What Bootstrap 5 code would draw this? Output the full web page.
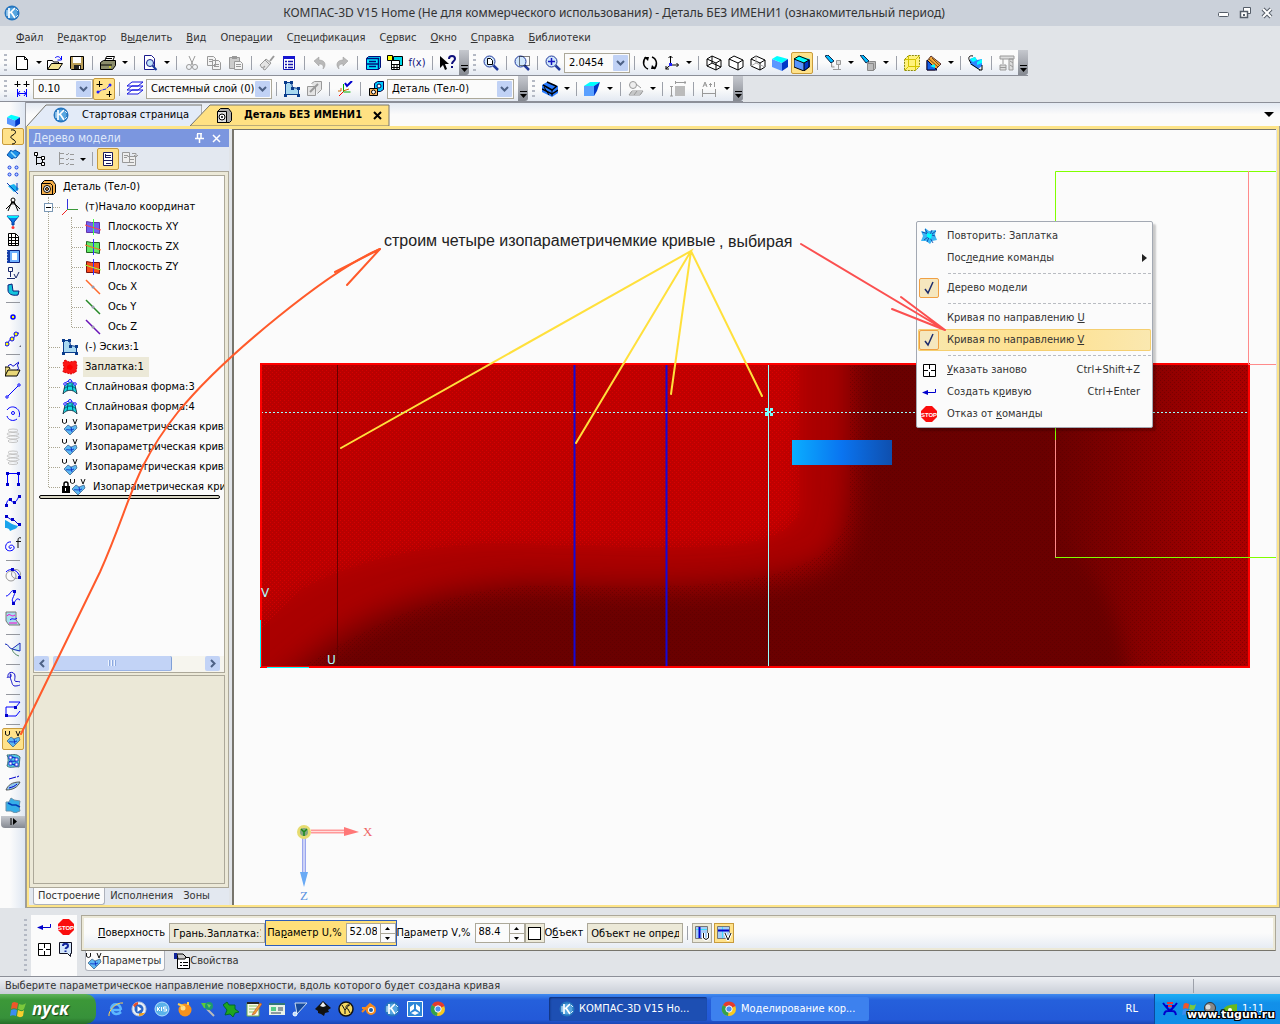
<!DOCTYPE html>
<html lang="ru">
<head>
<meta charset="utf-8">
<meta name="viewport" content="width=device-width, initial-scale=1">
<title>КОМПАС-3D V15 Home</title>
<link href="https://cdn.jsdelivr.net/npm/bootstrap@5.3.0/dist/css/bootstrap.min.css" rel="stylesheet">
<style>
:root{--ui:"DejaVu Sans Condensed","DejaVu Sans",Tahoma,sans-serif;--dither:#e1e4e8;--beige:#ece9d8}
body{font-family:var(--ui);font-size:11px;line-height:16px;color:#000;background:var(--dither)}
button,select,input{font:inherit;color:inherit;padding:0;margin:0;border:0;background:none;border-radius:0}
svg{display:block;flex:none}
svg.ic{width:16px;height:16px;overflow:visible}
.app{min-height:100vh}
.titlebar{height:26px;background:#cbd1da;color:#333;font-family:"Noto Sans","Open Sans",sans-serif;font-size:12px}
.menubar{height:24px;padding-left:16px;gap:14px}
.menubar a,.pagetab,.ctx button{color:#333;text-decoration:none}
.grip{width:3px;height:17px;margin:0 4px 0 4px;background:repeating-linear-gradient(#b4b9c4 0 2px,transparent 2px 5px)}
.toolrow{height:26px}
.strip{height:26px;background:linear-gradient(#fbfbfb 50%,#e3e9f2);border-bottom:1px solid #8c8f98}
.tb{width:22px;height:22px;display:flex;align-items:center;justify-content:center;flex:none}
.tb.on{background:#ffe28a;border:1px solid #c89b3c;border-radius:2px}
.dd{width:11px;height:22px;display:flex;align-items:center;justify-content:center;flex:none}
.dd::after{content:"";border:3px solid transparent;border-top-color:#000;border-bottom:0}
.dd.w{width:13px}
.vsep{width:9px;height:14px;flex:none;background:linear-gradient(#9da1aa,#9da1aa) center/1px 100% no-repeat}
.endcap{width:10px;height:25px;background:linear-gradient(#c5c8ce,#858991);border-radius:0 0 3px 0;flex:none;display:flex;align-items:flex-end;justify-content:center;padding-bottom:3px}
.combo{display:flex;height:20px;border:1px solid #aca899;background:#fbfbfb;flex:none}
.combo select{appearance:none;flex:1;min-width:0;padding-left:4px;overflow:hidden}
.combo i{width:15px;height:16px;margin:1px;background:#c1d2f5;border-radius:1px;display:flex;align-items:center;justify-content:center}
.c-step{width:60px}.c-layer{width:126px}.c-part{width:127px}.c-zoom{width:66px}
.tabsrow{height:24px;border-top:1px solid #8c8f98;background:linear-gradient(#e3e9f2,#fbfbfb 50%)}
.doctab{position:relative;height:22px;margin-top:1px}
.tab-start{width:176px}.tab-part{width:200px;margin-left:-12px}.tab-part .ic{margin-left:26px}
.doctab .shape{position:absolute;inset:0;width:100%;height:100%}
.doctab span,.doctab button,.doctab .ic{position:relative}
.side{width:26px;background:linear-gradient(90deg,#fbfbfb 40%,#dfe7f2);border-right:1px solid #9a9da4;padding-top:9px;padding-left:2px}
.side .tb.s{height:17px}
.hsep{height:1px;width:14px;margin:4px 0 3px 4px;background:#94979e;flex:none}
.side .endcap{width:24px;height:12px;border-radius:0 0 0 4px;margin-left:-1px}
.work{border:1px solid #a49f8c;border-top:0}
.work-in{border:2px solid #fde488;border-top-width:3px}
.tree{width:200px;background:#e3e8f0}
.tree-head{height:18px;background:#7b96df;color:#dfe8fa;padding:0 4px 0 4px;font-size:12px}
.tree-tools{padding:1px 0}
.tree-frame{background:var(--beige);border:1px solid #aca899;padding:3px}
.tree-list{height:498px;background:#fbfbfb;border:1px solid #aca899;overflow:hidden;padding-top:1px}
.tree-list ul{list-style:none;margin:0;padding:0;position:relative;white-space:nowrap}
.node{height:20px;display:flex;align-items:center;gap:7px;position:relative}
.l0 .node{padding-left:6px}
.l1 .node{padding-left:28px}
.l2 .node{padding-left:51px}
.tree-list .l1::before,.tree-list .l2::before{content:"";position:absolute;left:14px;top:0;bottom:10px;border-left:1px dotted #a9a590}
.tree-list .l2::before{left:37px}
.node::before{content:"";position:absolute;left:15px;width:11px;border-top:1px dotted #a9a590}
.root::before{display:none}
.l2 .node::before{left:38px}
.expander{position:absolute;left:10px;top:6px;width:9px;height:9px;background:#fff;border:1px solid #7b98b5;display:flex;align-items:center;justify-content:center}
.expander::after{content:"";width:5px;height:1px;background:#000}
.chosen{background:var(--beige);height:20px;line-height:20px;padding:0 5px 0 2px;margin-left:-2px}
.lock{margin-right:-7px}
.rollbar{height:4px;margin:-2px 4px 0 5px;border:1px solid #000;border-radius:2px;background:#d8d5c3;position:relative}
.hscroll{height:16px;background:#f6f5ee}
.hscroll button{width:15px;height:15px;background:#c2d3f6;border-radius:2px;display:flex;align-items:center;justify-content:center}
.hscroll .thumb{width:119px;border-right:1px solid #7f9fd6;border-bottom:1px solid #9ab3e4}
.tree-low{background:#ebe8d7;border:1px solid #aca899;margin-top:2px}
.pagetab{height:17px;padding:0 4px;border:1px solid transparent;border-top:0;border-radius:0 0 3px 3px;display:flex;align-items:center}
.pagetab.cur{background:#fbfbfb;border-color:#aeb2bb}
.pagetab.tall{height:20px;padding:0 3px 0 0}
.view{background:#fbfbfb;border-left:2px solid #77756c;border-top:1px solid #77756c;margin-left:3px;margin-right:1px;overflow:hidden}
.notes,.scene{position:absolute;left:0;top:0;pointer-events:none}
.ctx{position:absolute;left:916px;top:221px;width:237px;background:#fbfbfb;border:1px solid #a3a9b3;border-radius:2px;padding:3px 1px 2px;box-shadow:3px 3px 2px #0003}
.ctx button{height:22px;width:100%;display:flex;align-items:center;text-align:left;padding-right:11px}
.ctx .slot{width:20px;height:20px;margin:0 8px 0 1px;display:flex;align-items:center;justify-content:center;flex:none}
.ctx .tick{background:#f5e7be;border:1px solid #f0a044;border-radius:2px}
.ctx .hot{background:linear-gradient(90deg,#f8e9b0,#ffe08c 50%,#fae8b0);box-shadow:inset 0 0 0 1px #f5cf70;border-radius:2px}
.ctx hr{margin:4px 0 3px 30px;border:0;border-top:1px dashed #b9bcc2;opacity:1}
.props{height:68px;padding-top:7px}
.grip.long{height:52px}
.quick{width:46px;background:#fbfbfb;padding:1px 0 0 2px}
.propbox{height:36px;border:1px solid #aca899;border-bottom-color:#77756c;background:linear-gradient(#fbfbfb 50%,#e4eaf3);box-shadow:inset 0 0 0 2px #ece9d8}
.field{height:20px;border:1px solid #aca899;background:var(--beige);padding:0 3px;width:96px}
.spinner{display:flex;height:20px;border:1px solid #aca899;background:#fbfbfb}
.spinner input{width:33px;padding:0 3px 2px}
.spinner div{width:15px;border-left:1px solid #aca899}
.spinner button{height:9px;width:14px;display:flex;align-items:center;justify-content:center}
.spinner button+button{border-top:1px solid #aca899}
.hotparam{height:26px;border:1px solid #2f5eb8;background:#ffe07a;padding-left:1px}
.sq{width:20px;height:20px;border:1px solid #aca899;background:var(--beige);display:flex;align-items:center;justify-content:center}
.sq.on{background:#ffe28a;border-color:#c89b3c;margin-left:2px}
.sq input{appearance:none;width:13px;height:13px;border:1px solid #000;background:#fff}
.statusline{height:18px;border-top:1px solid #8c8f98;background:linear-gradient(#eef0f4,#c9ced7);color:#333;padding-left:5px}
.statusline .vsep{margin-right:82px}
.taskbar{height:30px;background:linear-gradient(#3f8bf0,#2560dc 20%,#2359d8 85%,#1a46b4);color:#fff}
.start{width:96px;height:30px;background:linear-gradient(#5fb35a,#3c9838 20%,#37913a 80%,#256d28);border-radius:0 10px 10px 0;font:italic bold 17px/30px "Open Sans",sans-serif;color:#fff;text-shadow:1px 1px 1px #0008;padding-left:10px}
.launch button{width:23px;height:24px;display:flex;align-items:center;justify-content:center}
.tasks{margin-left:100px}
.task{height:24px;width:158px;border-radius:2px;color:#fff;background:#3d81ee;padding:0 10px;text-align:left}
.task.cur{background:#1d4fb3;box-shadow:inset 1px 1px 2px #0f2f78}
.tray{width:126px;height:30px;background:linear-gradient(#1caef5,#1290e9 30%,#0f8ee8);border-left:1px solid #0c4a9c;position:relative;padding-left:7px}
.mark-url{position:absolute;right:5px;bottom:1px;font:bold 11px/16px "DejaVu Sans",sans-serif;color:#fff;text-shadow:1px 0 #000,-1px 0 #000,0 1px #000,0 -1px #000,1px 1px #000,-1px -1px #000,1px -1px #000,-1px 1px #000}
</style>
<script src="https://cdn.jsdelivr.net/npm/bootstrap@5.3.0/dist/js/bootstrap.bundle.min.js"></script>
</head>
<body>
<svg width="0" height="0" class="position-absolute" aria-hidden="true"><defs>
<g id="tri"><path d="M0 0h7L3.500 4z" fill="#000"/></g>
<symbol id="k" viewBox="0 0 16 16"><circle cx="8" cy="8" r="7.500" fill="#2676bf"/><circle cx="8" cy="8" r="5.500" fill="#57a6e0"/><path d="M5 3v10M6 8l5-5M7 7l4 6" stroke="#fff" stroke-width="1.700" fill="none"/><path d="M12 4l2 2M12 12l2-2M3 5v6" stroke="#d8ecfa" fill="none"/></symbol>
<symbol id="new" viewBox="0 0 16 16"><path d="M2.500 1.500h8l3 3v10h-11zM10.500 1.500v3h3" fill="#fff" stroke="#000"/></symbol>
<symbol id="open" viewBox="0 0 16 16"><path d="M.5 14V5.500h5l1 1.500h5v2" fill="#fff" stroke="#000"/><path d="M.5 14.500l4-6h11l-4 6z" fill="#f2e394" stroke="#000"/><path d="M8 3c2-2 4-2 6 1M14.500 1v4h-4" fill="none" stroke="#00f"/></symbol>
<symbol id="save" viewBox="0 0 16 16"><path d="M1.500 1.500h13v13h-12l-1-1z" fill="#b99e58" stroke="#000"/><path d="M4 2h8v6H4z" fill="#fff"/><path d="M5 10h7v4H5z" fill="#222"/><path d="M10 11h1v3h-1z" fill="#fff"/></symbol>
<symbol id="print" viewBox="0 0 16 16"><path d="M4.500 6.500l2-5h8l-2 5" fill="#fff" stroke="#000"/><path d="M.5 7.500l3-2h12v5l-3 4H.5z" fill="#8b8d6b" stroke="#000"/><path d="M1 10h11M6 3.500h6" stroke="#000"/><path d="M9 12h2" stroke="#ff0"/></symbol>
<symbol id="preview" viewBox="0 0 16 16"><path d="M2.500.5h7l3 3v11h-10z" fill="#fff" stroke="#1a1a8c"/><circle cx="8" cy="8" r="3.500" fill="#bfe4fb" stroke="#1a1a8c"/><path d="M10.500 10.500l4 4.500" stroke="#1a3c9c" stroke-width="2"/></symbol>
<symbol id="cut" viewBox="0 0 16 16"><path d="M5 1l4 9M11 1L7 10" stroke="#999" fill="none"/><circle cx="5" cy="12" r="2.500" fill="none" stroke="#999"/><circle cx="11" cy="12" r="2.500" fill="none" stroke="#999"/></symbol>
<symbol id="copy" viewBox="0 0 16 16"><path d="M1.500 1.500h6l2 2v7h-8zM6.500 5.500h6l2 2v7h-8z" fill="#f4f4f4" stroke="#999"/><path d="M3 4.500h4M3 6.500h3M8 9.500h5M8 11.500h5" stroke="#999"/></symbol>
<symbol id="paste" viewBox="0 0 16 16"><path d="M1.500 2.500h10v11h-10z" fill="#ccc" stroke="#999"/><path d="M4 1h5v3H4z" fill="#999"/><path d="M6.500 6.500h6l2 2v6h-8zM8 9.500h5M8 11.500h5" fill="#f4f4f4" stroke="#999"/></symbol>
<symbol id="brush" viewBox="0 0 16 16"><path d="M15 1l-4 5" stroke="#999" stroke-width="2"/><path d="M1 10l6-6 5 4-6 7-2-1 2-3-3 2z" fill="#e4e4e4" stroke="#999"/><path d="M6 5l5 5" stroke="#999"/></symbol>
<symbol id="propico" viewBox="0 0 16 16"><path d="M2.500 1.500h11v13h-11z" fill="#fff" stroke="#1616b0"/><path d="M2 1h12v3H2z" fill="#1616d0"/><path d="M4 6.500h2M4 9.500h2M4 12.500h2M7 6.500h5M7 9.500h5M7 12.500h5" stroke="#1616b0" stroke-width="1.500"/></symbol>
<symbol id="undo" viewBox="0 0 16 16"><path d="M2 6l5-4v3c6 0 8 5 4 9 1-4-1-5-4-5v2z" fill="#b9b9b9" stroke="#999" stroke-width=".5"/></symbol>
<symbol id="redo" viewBox="0 0 16 16"><path d="M14 6L9 2v3C3 5 1 10 5 14 4 10 6 9 9 9v2z" fill="#b9b9b9" stroke="#999" stroke-width=".5"/></symbol>
<symbol id="vars" viewBox="0 0 16 16"><path d="M1.500 3.500l2-2h12v11l-2 2h-12z" fill="#00e5ff" stroke="#00107c"/><path d="M1.500 3.500h12v11M4 6.500h7M4 11.500h7M2 9h11" fill="none" stroke="#00107c" stroke-width="1.500"/></symbol>
<symbol id="lib" viewBox="0 0 16 16"><path d="M6.500 1.500h9v9h-9z" fill="#00d8e8" stroke="#000"/><path d="M.5.5h5v5h-5z" fill="#ff0" stroke="#000"/><path d="M4.500 5.500h8v9h-8z" fill="#fff" stroke="#000"/><path d="M4 9.500h9M4 12.500h9M7 9v6M10 9v6" stroke="#000"/></symbol>
<symbol id="cursor" viewBox="0 0 16 16"><path d="M0 1v12l3-3 2 5 2-1-2-5h4z" fill="#000"/><path d="M9 4c0-4 6-4 6 0 0 2-3 2-3 5" fill="none" stroke="#10107c" stroke-width="2"/><path d="M11 11h2v2h-2z" fill="#10107c"/></symbol>
<g id="lens"><circle cx="6.500" cy="6.500" r="5.500" fill="#cfe6fb" stroke="#223a9c"/><path d="M10.500 10.500l4.500 4.500" stroke="#223a9c" stroke-width="2.500"/></g>
<symbol id="zall" viewBox="0 0 16 16"><use href="#lens"/><path d="M4.500 3.500h3l2 2v4h-5z" fill="#fff" stroke="#000"/></symbol>
<symbol id="zwin" viewBox="0 0 16 16"><use href="#lens"/><path d="M5.500 1.500h10v9h-10z" fill="none" stroke="#000" stroke-dasharray="1 1"/></symbol>
<symbol id="zin" viewBox="0 0 16 16"><use href="#lens"/><path d="M3 6.500h7M6.500 3v7" stroke="#1515c0" stroke-width="1.500"/></symbol>
<symbol id="rot" viewBox="0 0 16 16"><path d="M6 14C1 12 0 6 4 2M10 2c5 2 6 8 2 12" fill="none" stroke="#000" stroke-width="1.500"/><path d="M2 2h5L6 6zM14 14H9l1-4z" fill="#000"/></symbol>
<symbol id="axes" viewBox="0 0 16 16"><path d="M6.500 1v9h8M6.500 10l-5 4M4.500 3l2-2 2 2M12.500 8l2 2-2 2M2 11v3h3" fill="none" stroke="#000"/><path d="M5 8h3v3H5z" fill="#22f"/></symbol>
<symbol id="wire" viewBox="0 0 16 16"><path d="M1 4l5-3 9 4v7l-5 3-9-4zM1 4l9 4v7M10 8l5-3M6 1v7l-5 3M6 8l9 4" fill="#fff" stroke="#000"/></symbol>
<symbol id="hid" viewBox="0 0 16 16"><path d="M1 4l5-3 9 4v7l-5 3-9-4zM1 4l9 4v7M10 8l5-3" fill="#fff" stroke="#000"/></symbol>
<symbol id="thin" viewBox="0 0 16 16"><path d="M1 4l5-3 9 4v7l-5 3-9-4zM1 4l9 4v7M10 8l5-3" fill="#fff" stroke="#000"/><path d="M6 1v7l-5 3M6 8l9 4" fill="none" stroke="#aaa"/></symbol>
<symbol id="solid" viewBox="0 0 16 16"><path d="M0 4l10 4v8L0 12z" fill="#5a96ff"/><path d="M0 4l5-3 11 3-6 4z" fill="#0ff"/><path d="M10 8l6-4v8l-6 4z" fill="#0038c8"/></symbol>
<symbol id="solide" viewBox="0 0 16 16"><use href="#solid"/><path d="M0 4l5-3 10 4v7l-5 4-10-4zM0 4l10 4v8M10 8l5-3" fill="none" stroke="#000"/></symbol>
<symbol id="torchb" viewBox="0 0 16 16"><path d="M0 1l3-1 6 6-3 2z" fill="#0bf" stroke="#124"/><path d="M11.500 5.500h4v4h-4zM8 14.500h8M13.500 10v5M6.500 8v4h3" fill="#ddd" stroke="#999"/></symbol>
<symbol id="torchc" viewBox="0 0 16 16"><path d="M0 0l3 0 6 6-3 2z" fill="#0bf" stroke="#124"/><path d="M7.500 8.500l2-2h6v7l-2 2h-6zM7.500 8.500h6v7" fill="#bbb" stroke="#888"/></symbol>
<symbol id="ybox" viewBox="0 0 16 16"><path d="M.5 4.500l4-4h11v11l-4 4H.5z" fill="#fff27c" stroke="#8a8a10" stroke-dasharray="2 1"/><path d="M.5 4.500h11v11M11.500 4.500l4-4M4.500.5v11h11M.5 15.500l4-4" fill="none" stroke="#d4c400"/></symbol>
<symbol id="persp" viewBox="0 0 16 16"><path d="M5 1l10 8-6 6H1V6z" fill="#f2a93b" stroke="#533"/><path d="M1 5v10h10L5 9z" fill="#1560e8" stroke="#003"/><path d="M4 11l5-2v4z" fill="#0ff"/><path d="M3 4l9 8M6 3l7 7" stroke="#7a4a10"/></symbol>
<symbol id="rebuild" viewBox="0 0 16 16"><path d="M2 4l5-2 2 3 5-1v7l-4 3-8-5z" fill="#2f86ff"/><path d="M2 4l5-2 2 3-4 2zM9 7l5-3v4l-5 2z" fill="#0ff"/><path d="M3 8C-1 3 1 0 5 1M3 9l9 6M14 10v5h-3" fill="none" stroke="#000"/></symbol>
<symbol id="robot" viewBox="0 0 16 16"><path d="M1 1h14v3H1zM10 4h4v11h-4zM1 10h6v5H1z" fill="#ddd" stroke="#999"/><path d="M4 4v5M1 12.500h6M11 6l3 2M11 10l3 2" stroke="#999"/></symbol>
<symbol id="step" viewBox="0 0 16 16"><path d="M3.500 0v6M.5 3.500h6M12.500 0v6M9.500 3.500h6" stroke="#000"/><path d="M3.500 8v8M12.500 8v8M4 12.500h8M6 10l-2 2.500 2 2.500M10 10l2 2.500-2 2.500" fill="none" stroke="#00f"/></symbol>
<symbol id="snap" viewBox="0 0 16 16"><path d="M3.500 0v6M.5 3.500h6M13.500 10v6M10.500 13.500h5" stroke="#000"/><path d="M2 11l4-2 4-1 4-4" fill="none" stroke="#22f" stroke-dasharray="4 1"/><circle cx="2" cy="11" r="1.500" fill="#22f"/><circle cx="14" cy="4" r="1.500" fill="#22f"/></symbol>
<symbol id="layers" viewBox="0 0 16 16"><path d="M0 13l5-4h11l-5 4zM0 9l5-4h11l-5 4zM0 5l5-4h11l-5 4z" fill="#fff" stroke="#1414e0"/></symbol>
<symbol id="sketch" viewBox="0 0 16 16"><path d="M1.500 1.500h6l1 5 6 1v6h-13z" fill="#a8d8f0" stroke="#0a3c8c"/><path d="M0 0h3v3H0zM6 0h3v3H6zM0 13h3v3H0zM13 13h3v3h-3zM13 6h3v3h-3zM7 6h3v3H7z" fill="#0a3c8c"/></symbol>
<symbol id="gedit" viewBox="0 0 16 16"><path d="M1.500 5.500h8v9h-8zM5.500 2.500l3-2h7v8l-4 4" fill="#e4e4e4" stroke="#999"/><path d="M4 11l8-8" stroke="#999" stroke-width="2"/></symbol>
<symbol id="lcs" viewBox="0 0 16 16"><path d="M6.500 3v8h7" stroke="#0a0" fill="none"/><path d="M6 11l-4 4" stroke="#f00"/><path d="M1 10h3v-3M6 10l6-2" fill="none" stroke="#c60"/><path d="M8 2l2 3 5-5" stroke="#00c" stroke-width="2" fill="none"/></symbol>
<symbol id="parts" viewBox="0 0 16 16"><path d="M6.500 2.500l3-2h6v8l-3 2h-6z" fill="#00c8ff" stroke="#004"/><path d="M1.500 7.500h8v7h-8z" fill="#ffb65c" stroke="#000"/><circle cx="5.500" cy="11" r="2" fill="#fff" stroke="#000"/><circle cx="11" cy="5" r="2" fill="#fff" stroke="#004"/></symbol>
<symbol id="zebra" viewBox="0 0 16 16"><path d="M0 4l5-3 11 4v7l-6 4-10-5z" fill="#2a7cff"/><path d="M1 4l9 5 5-4M0 8l10 5 6-4M5 1l9 4" fill="none" stroke="#000" stroke-width="1.500"/><path d="M2 6l5 8M10 9v6" stroke="#000"/></symbol>
<symbol id="section" viewBox="0 0 16 16"><path d="M0 5l10-1v11H0z" fill="#5aa0ff"/><path d="M0 5l6-4h10l-6 4z" fill="#0ff"/><path d="M10 5l6-4-3 9-3 5z" fill="#0038c8"/></symbol>
<symbol id="gproj" viewBox="0 0 16 16"><circle cx="5" cy="4" r="3.500" fill="#eee" stroke="#999"/><path d="M8 3l5 4M1 14l3-4h11l-3 4zM6 14l3-4M2 12h12" fill="none" stroke="#999"/></symbol>
<symbol id="gdim" viewBox="0 0 16 16"><path d="M5 5h10v10H5z" fill="#bbb"/><path d="M1.500 5v10M0 5.500h3M0 15h3M5 1.500h11M5.500 0v3M15 0v3" stroke="#999"/></symbol>
<symbol id="gtol" viewBox="0 0 16 16"><path d="M1.500 8v8M14.500 8v8M2 12.500h12M2 6l2-5 2 5M3 4h3M8 3.500h3M9.500 2v4M13.500 1v5" stroke="#999" fill="none"/></symbol>
<symbol id="detail" viewBox="0 0 16 16"><path d="M1.500 4.500l3-3h8l3 4v8l-2 2h-12z" fill="#f5b04c" stroke="#000"/><path d="M1.500 4.500h9l2 2v9" fill="none" stroke="#000"/><circle cx="7" cy="10" r="3.500" fill="#fff" stroke="#000"/><circle cx="7" cy="10" r="1.500" fill="#e5902c" stroke="#000"/></symbol>
<symbol id="detailg" viewBox="0 0 16 16"><path d="M1.500 4.500l3-3h8l3 4v8l-2 2h-12z" fill="#aaa" stroke="#000"/><path d="M1.500 4.500h9v11h-9z" fill="#ddd" stroke="#000"/><circle cx="6" cy="10" r="3" fill="#fff" stroke="#000"/><circle cx="6" cy="10" r="1" fill="#000"/></symbol>
<symbol id="curve" viewBox="0 0 16 16"><path d="M6 1c5-1 6 3 2 5s-2 3 1 5 1 4-2 4" fill="none" stroke="#000"/></symbol>
<symbol id="surf" viewBox="0 0 16 16"><path d="M2 9l4-5c1 1 2 2 4 0l5 3-4 5c-2 0-2-1-4 1z" fill="#1d8fe8" stroke="#0a50a8"/><path d="M6 6l5 5" stroke="#9fe4ff" stroke-width="1.500"/></symbol>
<symbol id="arr" viewBox="0 0 16 16"><g fill="#bcd8ff" stroke="#1a3ce0"><circle cx="4.500" cy="4.500" r="1.500"/><circle cx="11.500" cy="4.500" r="1.500"/><circle cx="4.500" cy="11.500" r="1.500"/><circle cx="11.500" cy="11.500" r="1.500"/></g></symbol>
<symbol id="aux" viewBox="0 0 16 16"><path d="M3 6l6-2 5 5-5 3z" fill="#19b2f0"/><path d="M2 3l11 11M12 3v8" stroke="#0a3cb0"/></symbol>
<symbol id="compass" viewBox="0 0 16 16"><path d="M3 14L8 2l5 12M4 9c3-3 5-3 8 0M1 12l7-7 7 7" fill="none" stroke="#000"/><circle cx="8" cy="3" r="2" fill="#fff" stroke="#000"/></symbol>
<symbol id="funnel" viewBox="0 0 16 16"><path d="M2 2h12L9 8v3H7V8z" fill="#0a7ae8" stroke="#039"/><path d="M2 2h12l-2 2H4z" fill="#0ef"/><circle cx="8" cy="13.500" r="1.500" fill="#f33"/></symbol>
<symbol id="spec" viewBox="0 0 16 16"><path d="M3.500 2.500h7l3 3v9h-10zM4 6.500h9M4 9.500h9M4 12.500h9M6.500 3v12M10.500 3v12" fill="#fff" stroke="#000"/></symbol>
<symbol id="book" viewBox="0 0 16 16"><path d="M2.500 2.500h12v12h-12z" fill="#6fb0ff" stroke="#0a1e7c"/><path d="M2 2h3v13H2z" fill="#123ca8"/><path d="M7 5h5v7H7z" fill="#fff"/><path d="M2 3v12" stroke="#fff" stroke-dasharray="1 2"/></symbol>
<symbol id="meas" viewBox="0 0 16 16"><path d="M3.500 2.500h4v4h-4zM5.500 7v5M2 13.500h8" fill="none" stroke="#1a2a6c"/><path d="M9 9l2 4 3-6" fill="none" stroke="#1a2a6c"/></symbol>
<symbol id="sheet" viewBox="0 0 16 16"><path d="M3 3l4-1 1 7 6 0-1 4c-6 1-10-1-10-5z" fill="#14c4dc" stroke="#0a1e7c"/></symbol>
<symbol id="pt" viewBox="0 0 16 16"><circle cx="8" cy="8" r="2" fill="#ff0" stroke="#00f" stroke-width="1.500"/></symbol>
<symbol id="pts" viewBox="0 0 16 16"><path d="M1 13c4-1 2-5 6-5s0-5 7-6" fill="none" stroke="#00c"/><g fill="#ff0" stroke="#00f"><circle cx="2" cy="13" r="2"/><circle cx="7" cy="8" r="2"/><circle cx="11" cy="3" r="2"/></g><path d="M18 12v4h-4z" fill="#667"/></symbol>
<symbol id="load" viewBox="0 0 16 16"><path d="M0 15l3-6h12l-3 6zM0 15V6h4l1 2" fill="#e8d778" stroke="#000"/><path d="M3 5c6-5 2 4 8-2l3-2M12 9c4-2-2-4 2-7" fill="none" stroke="#00c"/></symbol>
<symbol id="seg" viewBox="0 0 16 16"><path d="M2 14L14 2" stroke="#00f"/><circle cx="2" cy="14" r="1.200" fill="#fff" stroke="#00f"/><circle cx="14" cy="2" r="1.200" fill="#fff" stroke="#00f"/></symbol>
<symbol id="arc" viewBox="0 0 16 16"><path d="M2 5C7-2 17 4 14 12M12 14C8 17 3 15 2 11" fill="none" stroke="#00f"/><circle cx="8" cy="8" r="1.500" fill="#fff" stroke="#00f"/></symbol>
<symbol id="spring" viewBox="0 0 16 16"><g fill="none" stroke="#c4c4c4"><ellipse cx="8" cy="3.500" rx="5" ry="1.500"/><ellipse cx="8" cy="7" rx="6" ry="1.500"/><ellipse cx="8" cy="10.500" rx="6" ry="1.500"/><ellipse cx="8" cy="14" rx="5" ry="1.500"/></g></symbol>
<symbol id="poly" viewBox="0 0 16 16"><path d="M2.500 14V2.500h11V14" fill="none" stroke="#00f"/><path d="M1 1h3v3H1zM12 1h3v3h-3zM1 12h3v3H1zM12 12h3v3h-3z" fill="#00c"/></symbol>
<symbol id="spl" viewBox="0 0 16 16"><path d="M1 13C3 3 5 8 8 9s4-2 6-6" fill="none" stroke="#00f"/><path d="M0 11h3v3H0zM4 5h3v3H4zM8 8h3v3H8zM13 2h3v3h-3z" fill="#00c"/></symbol>
<symbol id="onsurf" viewBox="0 0 16 16"><path d="M0 5c5 2 5 4 13 6-2 4-5 3-8 5-1-3-3-3-5-3z" fill="#1aa4ec"/><path d="M1 1l4 3 4 1 5 5" fill="none" stroke="#00c"/><path d="M0 0h3v3H0zM6 3h3v3H6zM13 8h3v3h-3z" fill="#00c"/></symbol>
<symbol id="spiral" viewBox="0 0 16 16"><path d="M6 10c1 2-2 2-2 0s4-3 5 0-4 5-7 3-1-9 4-8" fill="none" stroke="#00f"/><path d="M16 1c-3-1-3 1-3 4v6M11 4.500h5" fill="none" stroke="#111"/></symbol>
<symbol id="onc" viewBox="0 0 16 16"><circle cx="6" cy="9" r="5" fill="none" stroke="#999"/><circle cx="11" cy="7" r="4.500" fill="none" stroke="#999"/><path d="M1 5c4-5 13-2 14 6" fill="none" stroke="#00f"/><path d="M6 1h3v3H6zM13 9h3v3h-3z" fill="#00c"/></symbol>
<symbol id="join" viewBox="0 0 16 16"><path d="M1 7c4 0 5-7 8-5s-4 9-1 11 2-6 7-2" fill="none" stroke="#00f"/><path d="M7 13h3v3H7zM8 1h3v3H8z" fill="#00c"/></symbol>
<symbol id="proj" viewBox="0 0 16 16"><path d="M1 1h10v8l4 5H4l-3-4z" fill="#a6dfee" stroke="#777"/><path d="M2 5c3-4 4 2 8-1M4 12h8" fill="none" stroke="#f0c"/><path d="M5 9c3-3 4 1 7-2" fill="none" stroke="#00f"/></symbol>
<symbol id="tang" viewBox="0 0 16 16"><path d="M8 9l6-6v8z" fill="#bfe8f2"/><path d="M0 3c4 0 3 4 7 5l8-6v8l-8-2" fill="none" stroke="#1328b8"/><path d="M7 8c1 4 4 6 7 7" fill="none" stroke="#586"/></symbol>
<symbol id="equi" viewBox="0 0 16 16"><path d="M3 6c-1-6 7-6 7-1 0 4-1 4 0 5s3 0 5 1M2 7c0-2 5 1 4-3s-1 3 0 5 1 6 4 6 5-1 5-1" fill="none" stroke="#11c"/></symbol>
<symbol id="fil" viewBox="0 0 16 16"><path d="M4 1h11l-4 5H1v9h10l4-5" fill="none" stroke="#00f"/><path d="M9 5h3v3H9zM0 13h3v3H0z" fill="#00c"/></symbol>
<symbol id="iso" viewBox="0 0 16 16"><path d="M2 10l4-4 3 2 5-2 1 3-7 7-3-3z" fill="#5db8f2" stroke="#355a80" stroke-width=".7"/><path d="M4 11c2-1 3 1 8-1M9 8l1 5" stroke="#1034c8" fill="none"/><path d="M.5 0v3.500q2 2 4 0V0M11 0l2 5 2-5" fill="none" stroke="#111"/></symbol>
<symbol id="net" viewBox="0 0 16 16"><path d="M2 2c5 0 9-2 13 2l-1 10c-5-1-8 2-12-1 1-4 2-7 0-11z" fill="#53cbe2" stroke="#47707c"/><path d="M5 5c3-2 5 0 7 1s-2 3-6 2 1 5 6 4" fill="none" stroke="#00c"/><path d="M4 3h3v3H4zM10 5h3v3h-3zM4 9h3v3H4zM10 10h3v3h-3z" fill="#fff" stroke="#00c" stroke-width=".7"/></symbol>
<symbol id="sec" viewBox="0 0 16 16"><path d="M1 15c2-5 6-8 14-8-2 5-7 8-14 8z" fill="#8cc6ef" stroke="#555"/><path d="M4 13c4-1 6-2 8-4M4 4l7-2M12 2l2-1" fill="none" stroke="#00c"/></symbol>
<symbol id="inter" viewBox="0 0 16 16"><path d="M1 5l3 0 2-4 3 2 6 1-1 6 1 4-5 2-4-2-5 0z" fill="#35aee8" stroke="#6a8fa8"/><path d="M3 6l4 2 4 0 4 2" fill="none" stroke="#003cb4" stroke-width="1.500"/></symbol>
<symbol id="treei" viewBox="0 0 16 16"><path d="M4.500 3v11M5 6.500h4M5 12.500h4M10.500 7v6" fill="none" stroke="#000"/><path d="M2.500 1.500h3v3h-3zM9.500 5.500h3v3h-3zM9.500 11.500h3v3h-3z" fill="#fff" stroke="#000"/></symbol>
<symbol id="listg" viewBox="0 0 16 16"><path d="M1.500 1v13M2 2.500h4M2 7.500h4M2 12.500h4M8 3l1 1 2-2M12 3.500h4M8 8l1 1 2-2M12 8.500h4M8 13l1 1 2-2M12 13.500h4" fill="none" stroke="#999"/></symbol>
<symbol id="doc1" viewBox="0 0 16 16"><path d="M3.500 1.500h9v13h-9zM3 9.500h10" fill="#fff" stroke="#1a1a5c"/><path d="M5.500 3v4M6 4.500h5M6 6.500h5M6 12.500h5" stroke="#1a1a5c"/></symbol>
<symbol id="docg" viewBox="0 0 16 16"><path d="M.5 1.500h7v10h-7zM5.500 5.500h8v9h-8M10 2.500h4v3M12 4l2 2 2-2M7 8.500h5M7 11.500h5M2 4.500h4M2 6.500h3" fill="#eee" stroke="#999"/></symbol>
<symbol id="orig" viewBox="0 0 16 16"><path d="M5.500 0v10" stroke="#33d"/><path d="M5 10.500h11" stroke="#3a9a3a"/><path d="M5 11l-5 5" stroke="#e22"/></symbol>
<symbol id="pxy" viewBox="0 0 16 16"><path d="M1.500 2.500l5 1h8v11l-5-1h-8z" fill="#6f62f0" stroke="#63a"/><path d="M8 0h1v16H8z" fill="#4f4"/><path d="M0 6l16 5" stroke="#f44"/></symbol>
<symbol id="pzx" viewBox="0 0 16 16"><path d="M1.500 2.500l5 1h8v11l-5-1h-8z" fill="#63e863" stroke="#262"/><path d="M8 0h1v16H8z" fill="#33f"/><path d="M0 6l16 5" stroke="#f62"/></symbol>
<symbol id="pzy" viewBox="0 0 16 16"><path d="M1.500 2.500l5 1h8v11l-5-1h-8z" fill="#fa4b18" stroke="#711"/><path d="M8 0h1v16H8z" fill="#33f"/><path d="M0 6l16 5" stroke="#9f4"/></symbol>
<symbol id="ax" viewBox="0 0 16 16"><path d="M1 1l14 14" stroke="currentColor" stroke-width="1.500"/><circle cx="8" cy="8" r="1.500" fill="#99a"/></symbol>
<symbol id="patchr" viewBox="0 0 16 16"><path d="M3 1l4 2 7-1 1 5-1 6-5 2-4-1-4-1 1-5-1-4z" fill="#fb1616" stroke="#d00" stroke-dasharray="2 1"/><path d="M5 7l3-2 3 3-2 3-4-1z" fill="#f00"/></symbol>
<symbol id="patchb" viewBox="0 0 16 16"><path d="M4 0l4 3 7-1-1 5 2 5-5 1-2 3-4-3-5 0 2-5-2-5 4 1z" fill="#3ab6f5"/><path d="M4 1l8 14M1 4l13 4M15 3L3 12M6 14l5-12" stroke="#06389c" stroke-width=".8"/><path d="M6 5l5 1-1 5-4-2z" fill="#0ff"/></symbol>
<symbol id="sform" viewBox="0 0 16 16"><path d="M1 15l2-9c4-3 8-3 10 0l2 9c-4-5-10-5-14 0z" fill="#15dbe0" stroke="#245"/><path d="M2 10c4-4 8-4 12 0M6 5l-1 7M10 5l1 7" stroke="#057" fill="none"/><path d="M3 4l5-3 5 4" stroke="#22f" fill="none"/><circle cx="8" cy="2" r="1.500" fill="#fff" stroke="#22f"/><circle cx="3" cy="5" r="1.300" fill="#fff" stroke="#22f"/><circle cx="13" cy="5" r="1.300" fill="#fff" stroke="#22f"/></symbol>
<symbol id="target" viewBox="0 0 16 16"><path d="M2.500 2.500h12v12h-12zM8.500 3v4M8.500 10v4M3 8.500h4M10 8.500h4" fill="#fff" stroke="#000"/></symbol>
<symbol id="enter" viewBox="0 0 16 16"><path d="M14.500 5v3.500H6" fill="none" stroke="#00c"/><path d="M1 8.500l6-2.500v5z" fill="#00c"/></symbol>
<symbol id="stop" viewBox="0 0 16 16"><path d="M5 0h6l5 5v6l-5 5H5l-5-5V5z" fill="#fa0d0d"/><text x="8" y="10.500" font-size="6" font-weight="bold" font-family="Liberation Sans,sans-serif" text-anchor="middle" fill="#fff">STOP</text></symbol>
<symbol id="helpq" viewBox="0 0 16 16"><path d="M1.500 1.500h12v11h-1l0 3-3-3h-8z" fill="#d3e6fb" stroke="#112"/><path d="M5 5c0-3 5-3 5 0 0 2-2 1-2.500 3M7.500 9.500v1.500" fill="none" stroke="#11259c" stroke-width="2"/></symbol>
<symbol id="hand" viewBox="0 0 16 16"><path d="M3.500 4.500h12v11h-12z" fill="#fff" stroke="#000"/><path d="M6 9.500h2M9 9.500h5M6 12.500h2M9 12.500h5" stroke="#000"/><path d="M3 1h6l3 3-1 2H4z" fill="#ccc" stroke="#000"/><path d="M0 0h3v6H0z" fill="#11259c"/></symbol>
<symbol id="up" viewBox="0 0 16 16"><path d="M1.500 1.500h12v12h-12z" fill="#a6cdf5" stroke="#777"/><path d="M2 4.500h11" stroke="#4df"/><path d="M5.500 2v11" stroke="#00c" stroke-width="2"/><path d="M9.500 8v5q2.500 3 5 0V8" stroke="#fff" stroke-width="3" fill="none"/><path d="M9.500 8v5q2.500 3 5 0V8" stroke="#111" fill="none"/></symbol>
<symbol id="vp" viewBox="0 0 16 16"><path d="M1.500 1.500h12v12h-12z" fill="#a6cdf5" stroke="#777"/><path d="M6.500 2v11" stroke="#4df"/><path d="M2 5.500h11" stroke="#00c" stroke-width="2"/><path d="M9 8l3 7 3-7" stroke="#fff" stroke-width="3" fill="none"/><path d="M9 8l3 7 3-7" stroke="#111" fill="none"/></symbol>
<symbol id="ie" viewBox="0 0 16 16"><path d="M13 9H4c1 5 6 5 9 2M3 8c1-6 9-7 10 1" fill="none" stroke="#5db7ff" stroke-width="2.500"/><path d="M1 15C0 10 8 1 15 2" fill="none" stroke="#ffd34d"/></symbol>
<symbol id="wmp" viewBox="0 0 16 16"><circle cx="8" cy="8" r="7" fill="#e8eef6" stroke="#b8c4d8"/><path d="M2 4a7 7 0 0 1 5-3v3L4 7z" fill="#e8502c"/><path d="M14 12a7 7 0 0 1-6 3v-3z" fill="#f0a020"/><circle cx="8" cy="8" r="4.500" fill="#2a66c8"/><path d="M6.500 5l4 3-4 3z" fill="#fff"/></symbol>
<symbol id="kas" viewBox="0 0 16 16"><circle cx="8" cy="8" r="7" fill="#5ab2ea" stroke="#b4e0ff"/><path d="M3.500 6v4M6 6L4 8l2 2M7.500 6v4M12.500 6h-3v2h3v2h-3" stroke="#fff" fill="none"/></symbol>
<symbol id="orange" viewBox="0 0 16 16"><circle cx="8" cy="9" r="6.500" fill="#f6921e"/><circle cx="6" cy="7" r="2.500" fill="#ffe08a"/><path d="M1 3l5 2M11 1v3" stroke="#ffd050" stroke-width="2"/></symbol>
<symbol id="leaf" viewBox="0 0 16 16"><path d="M7 8l7 7" stroke="#bbb" stroke-width="2"/><path d="M1 2l6 0 3 6-6-1z" fill="#5cc938"/><circle cx="9" cy="5" r="4" fill="#1d9a70"/><path d="M7 3l4 1-2 3z" fill="#7c5"/></symbol>
<symbol id="dragon" viewBox="0 0 16 16"><path d="M0 4l4-3 2 3h6v4l4 3-4 1-2 4-3-3-5 1 2-5z" fill="#1fa51f" stroke="#063"/></symbol>
<symbol id="note" viewBox="0 0 16 16"><path d="M1 2h12v13H1z" fill="#f7fbe8" stroke="#6aa84f"/><path d="M3 5h8M3 8h8M3 11h6" stroke="#8bbf5e"/><path d="M7 12l7-10 2 1-7 10-3 1z" fill="#f0a02c" stroke="#a33" stroke-width=".5"/><path d="M1 1h12v2H1z" fill="#222"/></symbol>
<symbol id="card1" viewBox="0 0 16 16"><path d="M0 2h16v12H0z" fill="#e9f1e8"/><path d="M0 2h16v2H0z" fill="#377"/><path d="M2 6h5v4H2z" fill="#5c8"/><path d="M9 7h5M9 9h5M2 12h10" stroke="#345"/></symbol>
<symbol id="rul" viewBox="0 0 16 16"><path d="M3 2h12L5 13z" fill="#174a9c" stroke="#cde"/><circle cx="3" cy="13" r="2" fill="#bdf" stroke="#fff"/></symbol>
<symbol id="ink" viewBox="0 0 16 16"><path d="M8 0l8 7-3 2 1 2-4 1-1 3-3-2-3-1 0-2-3-2z" fill="#111"/><path d="M5 5l3-4 3 4-3 1z" fill="#eee"/></symbol>
<symbol id="ya" viewBox="0 0 16 16"><circle cx="8" cy="8" r="7" fill="#f5d860" stroke="#111" stroke-width="1.500"/><path d="M4 4l3 5v4M12 4c-5-1-5 4-2 4l2 4M7 9l4-5" stroke="#111" fill="none"/></symbol>
<symbol id="blend" viewBox="0 0 16 16"><path d="M1 11l8-8 5 4M1 7h6" fill="none" stroke="#f58a1e" stroke-width="2"/><circle cx="10" cy="9" r="4" fill="#fff" stroke="#f58a1e" stroke-width="2"/><circle cx="10" cy="9" r="2" fill="#1c5da8"/></symbol>
<symbol id="cube3" viewBox="0 0 16 16"><path d="M.5.5h15v15H.5z" fill="#2e87d8" stroke="#fff"/><path d="M7 3v5l-4 3V6zM9 3l4 3v5L9 8zM8 10l4 2-4 2-4-2z" fill="#fff"/></symbol>
<symbol id="chr" viewBox="0 0 16 16"><circle cx="8" cy="8" r="7" fill="#f7c920"/><path d="M8 8L2 4a7 7 0 0 1 12.500 1z" fill="#e33b2e"/><path d="M8 8l-1 7A7 7 0 0 1 2 4z" fill="#35a24a"/><circle cx="8" cy="8" r="3.200" fill="#4b8ff5" stroke="#fff"/></symbol>
<symbol id="flag" viewBox="0 0 18 18"><path d="M2 3c3-2 4 0 6 0L7 9C5 8 3 8 1 9z" fill="#f0562a"/><path d="M9 4c3 1 5 1 7-1l-2 6c-2 2-4 1-6 0z" fill="#7cc83c"/><path d="M1 10c2-1 4-1 6 0l-1 6c-2-1-4-1-6 0z" fill="#3c8df0"/><path d="M8 10c2 1 4 2 6 0l-1 6c-3 2-4 1-6 0z" fill="#f8cf2e"/></symbol>
</defs></svg>

<div class="app d-flex flex-column position-relative">
<header>
 <div class="titlebar d-flex align-items-center px-1 position-relative">
  <svg class="ic"><use href="#k"/></svg>
  <div class="flex-grow-1 text-center pe-2">КОМПАС-3D V15 Home (Не для коммерческого использования) - Деталь БЕЗ ИМЕНИ1 (ознакомительный период)</div>
  <div class="d-flex gap-1 pe-0">
   <button aria-label="Свернуть"><svg width="18" height="16"><rect x="2.500" y="7.500" width="10" height="4" rx="1" fill="#fff" stroke="#555d68"/></svg></button>
   <button aria-label="Восстановить"><svg width="18" height="16"><path d="M5.500 2.500h7v6h-7z" fill="#fff" stroke="#555d68"/><path d="M2.500 6.500h7v6h-7z" fill="#fff" stroke="#555d68" stroke-width="1.500"/><path d="M5 9h2v2H5z" fill="#555d68"/></svg></button>
   <button aria-label="Закрыть"><svg width="16" height="16"><path d="M3 4l8 8M11 4l-8 8" stroke="#555d68" stroke-width="4"/><path d="M3 4l8 8M11 4l-8 8" stroke="#fff" stroke-width="2"/></svg></button>
  </div>
 </div>
 <nav class="menubar d-flex align-items-center">
  <a href="#"><u>Ф</u>айл</a><a href="#"><u>Р</u>едактор</a><a href="#">В<u>ы</u>делить</a><a href="#"><u>В</u>ид</a><a href="#">Опера<u>ц</u>ии</a><a href="#">С<u>п</u>ецификация</a><a href="#">С<u>е</u>рвис</a><a href="#"><u>О</u>кно</a><a href="#"><u>С</u>правка</a><a href="#"><u>Б</u>иблиотеки</a>
 </nav>
 <div class="toolrow d-flex">
  <div class="strip d-flex align-items-center">
   <span class="grip"></span>
   <button class="tb" aria-label="Создать"><svg class="ic"><use href="#new"/></svg></button><button class="dd" aria-label="Ещё"></button>
   <button class="tb" aria-label="Открыть"><svg class="ic"><use href="#open"/></svg></button><button class="tb" aria-label="Сохранить"><svg class="ic"><use href="#save"/></svg></button><span class="vsep"></span>
   <button class="tb" aria-label="Печать"><svg class="ic"><use href="#print"/></svg></button><button class="dd" aria-label="Ещё"></button><span class="vsep"></span>
   <button class="tb" aria-label="Просмотр"><svg class="ic"><use href="#preview"/></svg></button><button class="dd" aria-label="Ещё"></button><span class="vsep"></span>
   <button class="tb" aria-label="Вырезать"><svg class="ic"><use href="#cut"/></svg></button><button class="tb" aria-label="Копировать"><svg class="ic"><use href="#copy"/></svg></button><button class="tb" aria-label="Вставить"><svg class="ic"><use href="#paste"/></svg></button><span class="vsep"></span>
   <button class="tb" aria-label="Копировать свойства"><svg class="ic"><use href="#brush"/></svg></button><button class="tb" aria-label="Свойства"><svg class="ic"><use href="#propico"/></svg></button><span class="vsep"></span>
   <button class="tb" aria-label="Отменить"><svg class="ic"><use href="#undo"/></svg></button><button class="tb" aria-label="Повторить"><svg class="ic"><use href="#redo"/></svg></button><span class="vsep"></span>
   <button class="tb" aria-label="Менеджер библиотек"><svg class="ic"><use href="#vars"/></svg></button><button class="tb" aria-label="Библиотека"><svg class="ic"><use href="#lib"/></svg></button>
   <button class="tb" style="color:#10107c">f(x)</button><span class="vsep"></span>
   <button class="tb" aria-label="Справка"><svg class="ic"><use href="#cursor"/></svg></button><span class="endcap"><svg width="7" height="7"><path d="M0 .5h7" stroke="#000"/><use href="#tri" y="3"/></svg></span>
  </div>
  <div class="strip d-flex align-items-center">
   <span class="grip"></span>
   <button class="tb" aria-label="Показать всё"><svg class="ic"><use href="#zall"/></svg></button><span class="vsep"></span>
   <button class="tb" aria-label="Рамкой"><svg class="ic"><use href="#zwin"/></svg></button><span class="vsep"></span>
   <button class="tb" aria-label="Увеличить"><svg class="ic"><use href="#zin"/></svg></button>
   <span class="combo c-zoom"><select aria-label="Масштаб"><option>2.0454</option></select><i><svg width="9" height="6"><path d="M1 1l3.500 3.500L8 1" fill="none" stroke="#4d6185" stroke-width="2"/></svg></i></span><span class="vsep"></span>
   <button class="tb" aria-label="Повернуть"><svg class="ic"><use href="#rot"/></svg></button><button class="tb" aria-label="Ориентация"><svg class="ic"><use href="#axes"/></svg></button><button class="dd" aria-label="Ещё"></button><span class="vsep"></span>
   <button class="tb" aria-label="Каркас"><svg class="ic"><use href="#wire"/></svg></button><button class="tb" aria-label="Без невидимых"><svg class="ic"><use href="#hid"/></svg></button><button class="tb" aria-label="Тонкие"><svg class="ic"><use href="#thin"/></svg></button><button class="tb" aria-label="Полутоновое"><svg class="ic"><use href="#solid"/></svg></button><button class="tb on" aria-label="С каркасом"><svg class="ic"><use href="#solide"/></svg></button><span class="vsep"></span>
   <button class="tb" aria-label="Скрыть"><svg class="ic"><use href="#torchb"/></svg></button><button class="dd w" aria-label="Ещё"></button><button class="tb" aria-label="Показать"><svg class="ic"><use href="#torchc"/></svg></button><button class="dd w" aria-label="Ещё"></button><span class="vsep"></span>
   <button class="tb" aria-label="Габарит"><svg class="ic"><use href="#ybox"/></svg></button><button class="tb" aria-label="Сечение"><svg class="ic"><use href="#persp"/></svg></button><button class="dd" aria-label="Ещё"></button><span class="vsep"></span>
   <button class="tb" aria-label="Перестроить"><svg class="ic"><use href="#rebuild"/></svg></button><span class="vsep"></span><button class="tb" aria-label="Станок"><svg class="ic"><use href="#robot"/></svg></button><span class="endcap"><svg width="7" height="7"><path d="M0 .5h7" stroke="#000"/><use href="#tri" y="3"/></svg></span>
  </div>
 </div>
 <div class="toolrow d-flex">
  <div class="strip d-flex align-items-center">
   <span class="grip"></span>
   <button class="tb" aria-label="Шаг"><svg class="ic"><use href="#step"/></svg></button>
   <span class="combo c-step"><select aria-label="Шаг курсора"><option>0.10</option></select><i><svg width="9" height="6"><path d="M1 1l3.500 3.500L8 1" fill="none" stroke="#4d6185" stroke-width="2"/></svg></i></span>
   <button class="tb on" aria-label="Привязки"><svg class="ic"><use href="#snap"/></svg></button><span class="vsep"></span>
   <button class="tb" aria-label="Слои"><svg class="ic"><use href="#layers"/></svg></button>
   <span class="combo c-layer"><select aria-label="Слой"><option>Системный слой (0)</option></select><i><svg width="9" height="6"><path d="M1 1l3.500 3.500L8 1" fill="none" stroke="#4d6185" stroke-width="2"/></svg></i></span><span class="vsep"></span>
   <button class="tb" aria-label="Эскиз"><svg class="ic"><use href="#sketch"/></svg></button><button class="tb" aria-label="Правка"><svg class="ic"><use href="#gedit"/></svg></button><span class="vsep"></span>
   <button class="tb" aria-label="ЛСК"><svg class="ic"><use href="#lcs"/></svg></button><span class="vsep"></span>
   <button class="tb" aria-label="Компоненты"><svg class="ic"><use href="#parts"/></svg></button>
   <span class="combo c-part"><select aria-label="Компонент"><option>Деталь (Тел-0)</option></select><i><svg width="9" height="6"><path d="M1 1l3.500 3.500L8 1" fill="none" stroke="#4d6185" stroke-width="2"/></svg></i></span>
   <span class="endcap ms-1"><svg width="7" height="7"><path d="M0 .5h7" stroke="#000"/><use href="#tri" y="3"/></svg></span>
  </div>
  <div class="strip d-flex align-items-center">
   <span class="grip"></span>
   <button class="tb" aria-label="Зебра"><svg class="ic"><use href="#zebra"/></svg></button><button class="dd" aria-label="Ещё"></button><span class="vsep"></span>
   <button class="tb" aria-label="Вид"><svg class="ic"><use href="#section"/></svg></button><button class="dd w" aria-label="Ещё"></button><span class="vsep"></span>
   <button class="tb" aria-label="Проекция"><svg class="ic"><use href="#gproj"/></svg></button><button class="dd" aria-label="Ещё"></button><span class="vsep"></span>
   <button class="tb" aria-label="Размер"><svg class="ic"><use href="#gdim"/></svg></button><span class="vsep"></span>
   <button class="tb" aria-label="Допуск"><svg class="ic"><use href="#gtol"/></svg></button><button class="dd w" aria-label="Ещё"></button>
   <span class="endcap"><svg width="7" height="7"><path d="M0 .5h7" stroke="#000"/><use href="#tri" y="3"/></svg></span>
  </div>
 </div>
</header>

<div class="d-flex flex-grow-1">
 <aside class="side d-flex flex-column flex-shrink-0">
  <button class="tb s" aria-label="Операции"><svg class="ic"><use href="#solid" width="13" height="13" x="2" y="2"/></svg></button>
  <button class="tb s on" aria-label="Кривые"><svg class="ic"><use href="#curve"/></svg></button>
  <button class="tb s" aria-label="Поверхности"><svg class="ic"><use href="#surf"/></svg></button>
  <button class="tb s" aria-label="Массивы"><svg class="ic"><use href="#arr"/></svg></button>
  <button class="tb s" aria-label="Вспомогательная геометрия"><svg class="ic"><use href="#aux"/></svg></button>
  <button class="tb s" aria-label="Измерения"><svg class="ic"><use href="#compass"/></svg></button>
  <button class="tb s" aria-label="Фильтры"><svg class="ic"><use href="#funnel"/></svg></button>
  <button class="tb s" aria-label="Спецификация"><svg class="ic"><use href="#spec"/></svg></button>
  <button class="tb s" aria-label="Отчёты"><svg class="ic"><use href="#book"/></svg></button>
  <button class="tb s" aria-label="Оформление"><svg class="ic"><use href="#meas"/></svg></button>
  <button class="tb s" aria-label="Листовое тело"><svg class="ic"><use href="#sheet"/></svg></button>
  <span class="hsep"></span>
  <button class="tb" aria-label="Точка"><svg class="ic"><use href="#pt"/></svg></button>
  <button class="tb" aria-label="Точки"><svg class="ic"><use href="#pts"/></svg></button>
  <span class="hsep"></span>
  <button class="tb" aria-label="Из файла"><svg class="ic"><use href="#load"/></svg></button>
  <button class="tb" aria-label="Отрезок"><svg class="ic"><use href="#seg"/></svg></button>
  <button class="tb" aria-label="Дуга"><svg class="ic"><use href="#arc"/></svg></button>
  <button class="tb" aria-label="Спираль"><svg class="ic"><use href="#spring"/></svg></button>
  <button class="tb" aria-label="Коническая спираль"><svg class="ic"><use href="#spring"/></svg></button>
  <button class="tb" aria-label="Ломаная"><svg class="ic"><use href="#poly"/></svg></button>
  <button class="tb" aria-label="Сплайн"><svg class="ic"><use href="#spl"/></svg></button>
  <button class="tb" aria-label="Сплайн на поверхности"><svg class="ic"><use href="#onsurf"/></svg></button>
  <button class="tb" aria-label="По закону"><svg class="ic"><use href="#spiral"/></svg></button>
  <span class="hsep"></span>
  <button class="tb" aria-label="Контур"><svg class="ic"><use href="#onc"/></svg></button>
  <button class="tb" aria-label="Соединение"><svg class="ic"><use href="#join"/></svg></button>
  <button class="tb" aria-label="Проекционная"><svg class="ic"><use href="#proj"/></svg></button>
  <span class="hsep"></span>
  <button class="tb" aria-label="Усечение"><svg class="ic"><use href="#tang"/></svg></button>
  <span class="hsep"></span>
  <button class="tb" aria-label="Эквидистанта"><svg class="ic"><use href="#equi"/></svg></button>
  <span class="hsep"></span>
  <button class="tb" aria-label="Скругление"><svg class="ic"><use href="#fil"/></svg></button>
  <span class="hsep"></span>
  <button class="tb on" aria-label="Изопараметрическая кривая"><svg class="ic"><use href="#iso"/></svg></button>
  <button class="tb" aria-label="Сетка"><svg class="ic"><use href="#net"/></svg></button>
  <button class="tb" aria-label="Сечение"><svg class="ic"><use href="#sec"/></svg></button>
  <button class="tb" aria-label="Пересечение"><svg class="ic"><use href="#inter"/></svg></button>
  <span class="endcap"><svg width="7" height="7"><path d="M1 0v7" stroke="#000"/><path d="M3 0v7l4-3.500z"/></svg></span>
 </aside>

 <main class="d-flex flex-column flex-grow-1">
  <div class="tabsrow d-flex align-items-start">
   <div class="doctab tab-start d-flex align-items-center">
    <svg class="shape" preserveAspectRatio="none" viewBox="0 0 176 22"><path d="M1 22L20 1h156v21" fill="#e3ebf8" stroke="#77756c"/></svg>
    <svg class="ic ms-4 me-3 ps-0"><use href="#k" x="3"/></svg><span>Стартовая страница</span>
   </div>
   <div class="doctab tab-part d-flex align-items-center fw-bold">
    <svg class="shape" preserveAspectRatio="none" viewBox="0 0 200 22"><path d="M0 22L20 1h179v21z" fill="#ffe183" stroke="#77756c"/></svg>
    <svg class="ic me-2"><use href="#detailg"/></svg><span class="ms-1 flex-grow-1">Деталь БЕЗ ИМЕНИ1</span>
    <button class="me-2" aria-label="Закрыть вкладку"><svg width="9" height="9"><path d="M1 1l7 7M8 1L1 8" stroke="#000" stroke-width="2"/></svg></button>
   </div>
   <button class="ms-auto me-1 align-self-center" aria-label="Список вкладок"><svg width="13" height="6"><path d="M1 0h10L6 5z"/></svg></button>
  </div>
  <div class="work d-flex flex-grow-1"><div class="work-in d-flex flex-grow-1">
   <section class="tree d-flex flex-column flex-shrink-0">
    <div class="tree-head d-flex align-items-center"><span class="flex-grow-1">Дерево модели</span>
     <button aria-label="Закрепить" class="me-2"><svg width="9" height="10"><path d="M2 .5h5M2.500 1v4M6 1v4M0 5.500h9M4.500 6v4" stroke="#fff" stroke-width="1.500" fill="none"/></svg></button>
     <button aria-label="Закрыть" class="me-1"><svg width="9" height="9"><path d="M1 1l7 7M8 1L1 8" stroke="#fff" stroke-width="1.500"/></svg></button></div>
    <div class="tree-tools d-flex align-items-center">
     <button class="tb" aria-label="Структура"><svg class="ic"><use href="#treei"/></svg></button><button class="tb ms-1" aria-label="Список"><svg class="ic"><use href="#listg"/></svg></button><button class="dd" aria-label="Ещё"></button><span class="vsep"></span>
     <button class="tb on" aria-label="Состав"><svg class="ic"><use href="#doc1"/></svg></button><button class="tb" aria-label="Окно"><svg class="ic"><use href="#docg"/></svg></button>
    </div>
    <div class="tree-frame d-flex flex-column flex-grow-1">
     <div class="tree-list d-flex flex-column">
      <ul class="l0"><li><div class="node root"><svg class="ic"><use href="#detail"/></svg>Деталь (Тел-0)</div>
       <ul class="l1">
        <li><div class="node"><span class="expander"></span><svg class="ic"><use href="#orig"/></svg>(т)Начало координат</div>
         <ul class="l2">
          <li class="node"><svg class="ic"><use href="#pxy"/></svg>Плоскость XY</li>
          <li class="node"><svg class="ic"><use href="#pzx"/></svg>Плоскость ZX</li>
          <li class="node"><svg class="ic"><use href="#pzy"/></svg>Плоскость ZY</li>
          <li class="node"><svg class="ic" color="#ff6a2c"><use href="#ax"/></svg>Ось X</li>
          <li class="node"><svg class="ic" color="#268a26"><use href="#ax"/></svg>Ось Y</li>
          <li class="node"><svg class="ic" color="#6a12b8"><use href="#ax"/></svg>Ось Z</li>
         </ul></li>
        <li class="node"><svg class="ic"><use href="#sketch"/></svg>(-) Эскиз:1</li>
        <li class="node"><svg class="ic"><use href="#patchr"/></svg><span class="chosen">Заплатка:1</span></li>
        <li class="node"><svg class="ic"><use href="#sform"/></svg>Сплайновая форма:3</li>
        <li class="node"><svg class="ic"><use href="#sform"/></svg>Сплайновая форма:4</li>
        <li class="node"><svg class="ic"><use href="#iso"/></svg>Изопараметрическая кривая:1</li>
        <li class="node"><svg class="ic"><use href="#iso"/></svg>Изопараметрическая кривая:2</li>
        <li class="node"><svg class="ic"><use href="#iso"/></svg>Изопараметрическая кривая:3</li>
        <li class="node"><svg class="lock" width="8" height="12"><path d="M2 6V3a2 2 0 0 1 4 0v3" fill="none" stroke="#000" stroke-width="1.500"/><path d="M0 5h8v7H0z"/><path d="M3.500 7v3" stroke="#fff"/></svg><svg class="ic"><use href="#iso"/></svg>Изопараметрическая кривая:4</li>
       </ul></li></ul>
      <div class="rollbar"></div>
      <div class="hscroll d-flex mt-auto ps-0 pe-1">
       <button aria-label="Влево"><svg width="6" height="9"><path d="M5 1L1.500 4.500 5 8" fill="none" stroke="#4d6185" stroke-width="2"/></svg></button>
       <button class="thumb ms-1" aria-label="Прокрутка"><svg width="9" height="6"><path d="M.5 0v6M3.500 0v6M6.500 0v6" stroke="#eef4fe"/><path d="M1.500 0v6M4.500 0v6M7.500 0v6" stroke="#8ca9de"/></svg></button>
       <button class="ms-auto" aria-label="Вправо"><svg width="6" height="9"><path d="M1 1l3.500 3.500L1 8" fill="none" stroke="#4d6185" stroke-width="2"/></svg></button>
      </div>
     </div>
     <div class="tree-low flex-grow-1"></div>
    </div>
    <div class="d-flex gap-1 px-1 pb-0"><a href="#" class="pagetab cur px-1">Построение</a><a href="#" class="pagetab px-0">Исполнения</a><a href="#" class="pagetab px-1">Зоны</a></div>
   </section>
   <section class="view flex-grow-1"></section>
  </div></div>
 </main>
</div>

<section class="props d-flex">
 <span class="grip long ms-4 mt-1"></span>
 <div class="quick d-flex flex-wrap align-content-start flex-shrink-0">
  <button class="tb" aria-label="Создать"><svg class="ic"><use href="#enter"/></svg></button><button class="tb" aria-label="Прервать"><svg class="ic"><use href="#stop"/></svg></button>
  <button class="tb" aria-label="Заново"><svg class="ic"><use href="#target"/></svg></button><button class="tb" aria-label="Справка"><svg class="ic"><use href="#helpq"/></svg></button>
 </div>
 <div class="flex-grow-1 ms-1 me-1">
  <div class="propbox d-flex align-items-center ps-3">
   <label for="f1" class="me-1"><u>П</u>оверхность</label><input id="f1" class="field" value="Грань.Заплатка:1" readonly>
   <div class="hotparam d-flex align-items-center"><label for="f2" class="me-1">Па<u>р</u>аметр U,%</label><div class="spinner"><input id="f2" value="52.0842"><div><button aria-label="Больше"><svg width="5" height="3"><path d="M0 3h5L2.500 0z"/></svg></button><button aria-label="Меньше"><svg width="5" height="3"><path d="M0 0h5L2.500 3z"/></svg></button></div></div></div>
   <label for="f3" class="me-1">П<u>а</u>раметр V,%</label><div class="spinner"><input id="f3" value="88.4"><div><button aria-label="Больше"><svg width="5" height="3"><path d="M0 3h5L2.500 0z"/></svg></button><button aria-label="Меньше"><svg width="5" height="3"><path d="M0 0h5L2.500 3z"/></svg></button></div></div>
   <span class="sq"><input type="checkbox" id="f4"></span><label for="f4" class="me-1">О<u>б</u>ъект</label><input class="field" aria-label="Объект" value="Объект не определен" readonly><span class="vsep"></span>
   <button class="sq" aria-label="Направление U"><svg class="ic"><use href="#up"/></svg></button><button class="sq on" aria-label="Направление V"><svg class="ic"><use href="#vp"/></svg></button>
  </div>
  <div class="d-flex gap-2 ps-1"><a href="#" class="pagetab tall cur"><svg class="ic"><use href="#iso"/></svg>Параметры</a><a href="#" class="pagetab tall"><svg class="ic"><use href="#hand"/></svg>Свойства</a></div>
 </div>
</section>
<div class="statusline d-flex align-items-center">Выберите параметрическое направление поверхности, вдоль которого будет создана кривая<span class="vsep ms-auto"></span></div>
<footer class="taskbar d-flex align-items-center">
 <button class="start d-flex align-items-center gap-1"><svg width="18" height="18"><use href="#flag"/></svg>пуск</button>
 <div class="launch d-flex ms-2">
  <button aria-label="IE"><svg class="ic"><use href="#ie"/></svg></button><button aria-label="Плеер"><svg class="ic"><use href="#wmp"/></svg></button><button aria-label="KIS"><svg class="ic"><use href="#kas"/></svg></button><button aria-label="Браузер"><svg class="ic"><use href="#orange"/></svg></button><button aria-label="Лупа"><svg class="ic"><use href="#leaf"/></svg></button><button aria-label="Дракон"><svg class="ic"><use href="#dragon"/></svg></button><button aria-label="Блокнот"><svg class="ic"><use href="#note"/></svg></button><button aria-label="Окно"><svg class="ic"><use href="#card1"/></svg></button><button aria-label="Чертёж"><svg class="ic"><use href="#rul"/></svg></button><button aria-label="Inkscape"><svg class="ic"><use href="#ink"/></svg></button><button aria-label="YA"><svg class="ic"><use href="#ya"/></svg></button><button aria-label="Blender"><svg class="ic"><use href="#blend"/></svg></button><button aria-label="Компас"><svg class="ic"><use href="#k"/></svg></button><button aria-label="Куб"><svg class="ic"><use href="#cube3"/></svg></button><button aria-label="Chrome"><svg class="ic"><use href="#chr"/></svg></button>
 </div>
 <div class="tasks d-flex flex-grow-1"><button class="task cur d-flex align-items-center gap-1"><svg class="ic"><use href="#k"/></svg>КОМПАС-3D V15 Ho...</button><button class="task ms-1 d-flex align-items-center gap-1"><svg class="ic"><use href="#chr"/></svg>Моделирование кор...</button></div>
 <span class="me-3">RL</span>
 <div class="tray d-flex align-items-center gap-1">
  <svg width="16" height="16"><path d="M1 2l4 5M15 2l-4 5M2 14c1-5 3-4 6-4s5-1 6 4M5 5c0 5 6 5 6 0z" fill="none" stroke="#00c" stroke-width="2"/><path d="M5 2h6M6 5h4" stroke="#e33" stroke-width="2"/></svg><svg class="ic"><use href="#flag"/></svg><svg width="16" height="16"><circle cx="8" cy="7" r="5.500" fill="#888" stroke="#333"/><circle cx="6" cy="6" r="2.500" fill="#ddd"/></svg><svg width="16" height="16"><path d="M1 9c3-6 9-5 14-6v11H4z" fill="#6ab81c"/><circle cx="8" cy="9" r="2" fill="#fff"/></svg><span>1:11</span>
  <span class="mark-url">www.tugun.ru</span>
 </div>
</footer>

<svg class="scene" width="1276" height="906" aria-hidden="true">
 <defs>
  <clipPath id="face"><rect x="261" y="364" width="989" height="304"/></clipPath>
  <filter id="soft" x="-20%" y="-20%" width="140%" height="140%"><feGaussianBlur stdDeviation="15"/></filter>
  <filter id="soft2" x="-20%" y="-20%" width="140%" height="140%"><feGaussianBlur stdDeviation="9"/></filter>
  <linearGradient id="rg" x1="1055" x2="1240" y1="0" y2="0" gradientUnits="userSpaceOnUse"><stop offset="0" stop-color="#a80000" stop-opacity="0"/><stop offset="1" stop-color="#aa0000"/></linearGradient>
  <linearGradient id="lit" x1="261" x2="760" y1="0" y2="0" gradientUnits="userSpaceOnUse"><stop offset="0" stop-color="#f00" stop-opacity=".1"/><stop offset="1" stop-color="#f00" stop-opacity=".2"/></linearGradient>
  <linearGradient id="bg" x1="0" x2="1"><stop offset="0" stop-color="#0aaeff"/><stop offset=".5" stop-color="#0a74f0"/><stop offset="1" stop-color="#0f4fae"/></linearGradient>
  <pattern id="dots" width="4" height="4" patternUnits="userSpaceOnUse"><path d="M0 0h1v1H0zM2 2h1v1H2z" fill="#f00"/></pattern>
  <pattern id="dk" width="4" height="4" patternUnits="userSpaceOnUse"><path d="M0 0h1v1H0zM2 2h1v1H2z" fill="#500000"/></pattern>
 </defs>
 <g clip-path="url(#face)">
  <rect x="261" y="364" width="989" height="304" fill="#aa0000"/>
  <path d="M240 340H800V510Q790 540 730 545T500 543Q380 546 300 590L240 630z" fill="url(#lit)" filter="url(#soft2)"/>
  <path d="M240 340H800V510Q790 540 730 545T500 543Q380 546 300 590L240 630z" fill="url(#dots)" opacity=".6" filter="url(#soft2)"/>
  <path d="M261 364H800V510Q790 540 730 545T500 543Q380 546 300 590L261 630z" fill="url(#dots)" opacity=".4"/>
  <path d="M230 740C310 645 380 588 540 584C680 592 790 585 830 560C856 535 852 480 852 330H1300V740z" fill="#6a0000" filter="url(#soft)"/>
  <path d="M1055 340H1270V690H1130Q1120 600 1080 560T1055 340z" fill="url(#rg)" filter="url(#soft2)"/>
  <path d="M300 668C380 620 440 590 540 585C700 590 850 590 850 500V364H1250V668z" fill="url(#dk)" opacity=".4"/>
  <path d="M337.500 364V668" stroke="#600"/>
 </g>
 <g fill="none">
  <path d="M574.500 364V668M666.500 364V668" stroke="#1408d8" stroke-width="2"/>
  <path d="M768.500 364V668" stroke="#9ff"/><path d="M261 412.500H1250" stroke="#9ff" stroke-dasharray="2 2"/>
  <rect x="261" y="364" width="988" height="303" stroke="#f00" stroke-width="2"/>
  <path d="M1055.500 440V171.500H1276M1055 557.500H1276" stroke="#80ff00"/><path d="M1248.500 171V364.500H1276M1055.500 440V557" stroke="#ff8a8a"/>
  <path d="M260.500 620V667M267 667.500H309" stroke="#0ff"/>
 </g>
 <path d="M765 408h3v3h2v-3h3v3h-2v2h2v3h-3v-3h-2v3h-3v-3h2v-2h-2z" fill="#7ff"/>
 <rect x="792" y="440" width="100" height="25" fill="url(#bg)"/>
 <g font-family="DejaVu Sans,sans-serif" font-size="12" fill="#aff"><text x="261" y="597">V</text><text x="327" y="664">U</text></g>
 <g font-family="Liberation Serif,serif" font-size="13"><text x="363" y="836" fill="#e66">X</text><text x="300" y="900" fill="#5a92e0">Z</text></g>
 <path d="M311 831.500h34" stroke="#f99" stroke-width="4"/><path d="M311 831.500h34" stroke="#fdd" stroke-width="1"/><path d="M344 827l15 5-15 4z" fill="#f77"/>
 <path d="M304 838v36" stroke="#9aa6ee" stroke-width="4"/><path d="M304 838v36" stroke="#fff"/><path d="M300 872h8l-4 15z" fill="#6aaaf5"/>
 <circle cx="304" cy="832" r="5.500" fill="#83a583" stroke="#e6dc70" stroke-width="3"/><path d="M301 829l3 3 3-3M304 832v4" stroke="#1a8a1a" fill="none" stroke-width="1.500"/>
</svg>

<div class="ctx">
 <button><span class="slot"><svg class="ic"><use href="#patchb"/></svg></span>Повторить: Заплатка</button>
 <button class="pe-1"><span class="slot"></span>Пос<u>л</u>едние команды<svg class="ms-auto" width="5" height="8"><path d="M0 0v8l5-4z" fill="#222"/></svg></button>
 <hr>
 <button><span class="slot tick"><svg width="12" height="14"><path d="M2 8l3 4 5-11" fill="none" stroke="#1c2c6c" stroke-width="1.500"/></svg></span><u>Д</u>ерево модели</button>
 <hr>
 <button><span class="slot"></span><span>Кривая по направлению <u>U</u></span></button>
 <button class="hot"><span class="slot tick"><svg width="12" height="14"><path d="M2 8l3 4 5-11" fill="none" stroke="#1c2c6c" stroke-width="1.500"/></svg></span><span>Кривая по направлению <u>V</u></span></button>
 <hr>
 <button><span class="slot"><svg class="ic"><use href="#target"/></svg></span><span><u>У</u>казать заново</span><span class="ms-auto">Ctrl+Shift+Z</span></button>
 <button><span class="slot"><svg class="ic"><use href="#enter"/></svg></span><span>Создать к<u>р</u>ивую</span><span class="ms-auto">Ctrl+Enter</span></button>
 <button><span class="slot"><svg class="ic"><use href="#stop"/></svg></span><span>Отказ от <u>к</u>оманды</span></button>
</div>

<svg class="notes" width="1276" height="906">
 <g fill="none" stroke="#ff5a2a" stroke-width="2" stroke-linecap="round"><path d="M21 734L100 572C132 500 132 470 178 412C225 355 330 270 380 249"/><path d="M380 249L335 272M380 249L347 285"/></g>
 <g fill="none" stroke="#ffe03c" stroke-width="2" stroke-linecap="round"><path d="M341 448L691 251L576 443M691 251L671 394M691 251L762 396"/></g>
 <g fill="none" stroke="#fb5050" stroke-width="2" stroke-linecap="round"><path d="M801 244L945 330M945 330L892 309M945 330L901 297"/></g>
 <g font-family="Liberation Sans,sans-serif" font-size="16" fill="#222"><text x="384" y="246">строим четыре изопараметричемкие кривые</text><text x="719" y="247">, выбирая</text></g>
</svg>
</div>
</body>
</html>
